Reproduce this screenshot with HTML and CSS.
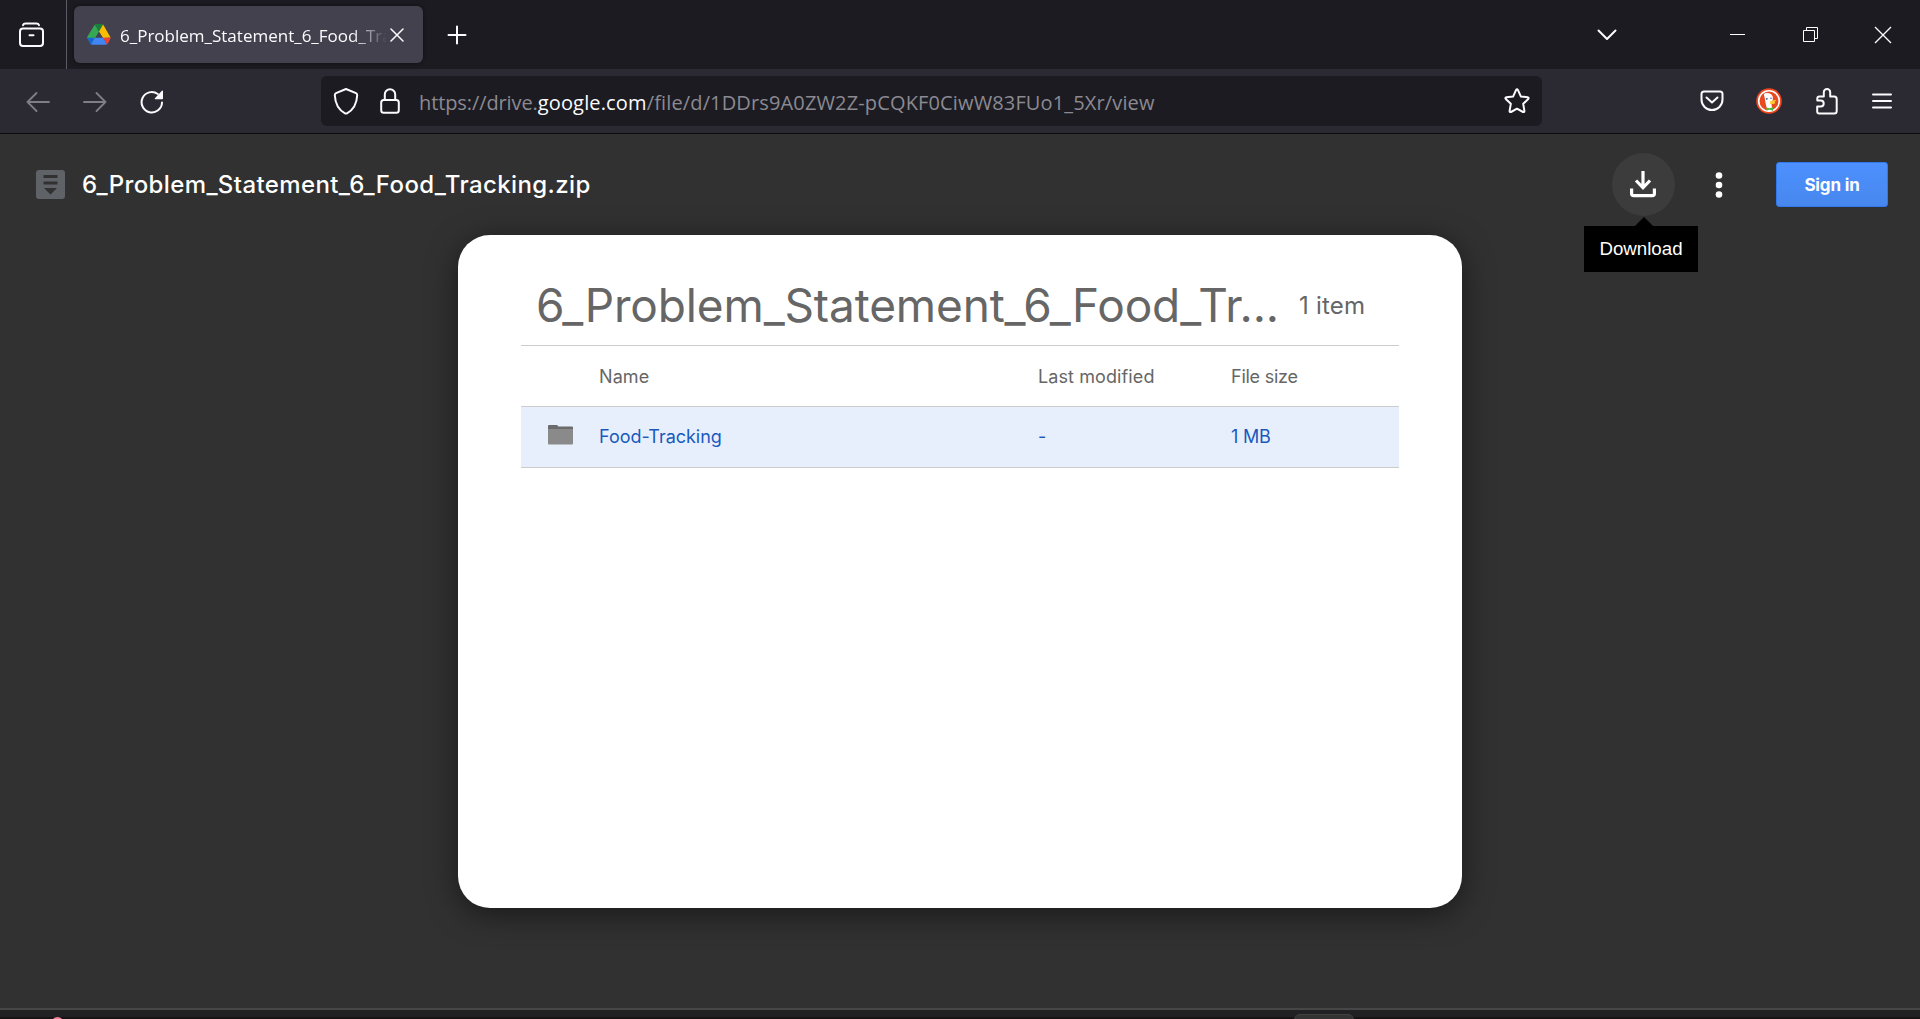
FILE: index.html
```html
<!DOCTYPE html>
<html lang="en">
<head>
<meta charset="utf-8">
<title>6_Problem_Statement_6_Food_Tracking.zip - Google Drive</title>
<link rel="stylesheet" href="styles.css">
</head>
<body>
<div class="window">
  <header class="tabbar">
    <div class="firefox-view">
      <svg width="28" height="28" viewBox="0 0 28 28" fill="none" stroke="#fbfbfe" stroke-width="2" stroke-linecap="round" stroke-linejoin="round"><path d="M6 3.2Q6.6 1.5 8.5 1.5h11Q21.400 1.500 22 3.200"/><rect x="3" y="6.500" width="23" height="17.500" rx="3"/><path d="M12.500 13.200h4"/></svg>
    </div>
    <div class="tab">
      <svg class="tab-icon" width="24" height="21" viewBox="0 0 24 21"><path fill="#34a853" d="M7.900.5 12 7.600 4.200 20.500.4 14Q0 13.200.4 12.500z"/><path fill="#188038" d="M7.900.5Q8.300 0 9 0h6q.8 0 1.100.5L12 7.600z"/><path fill="#fbbc04" d="M16.100.5 23.600 13.500 16.200 14 12 7.600z"/><path fill="#1967d2" d="M.1 13.800h7.800L4.200 20.600Q3.800 20.500 3.500 20z"/><path fill="#ea4335" d="M16.100 13.800h7.800Q23.800 14.400 20.500 20q-.3.500-.7.600z"/><path fill="#4285f4" d="M7.900 13.800h8.200l3.700 6.800q-.3.200-1 .2H5.200q-.6 0-1-.2z"/></svg>
      <span class="tab-title">6_Problem_Statement_6_Food_Tracking.zip</span>
      <svg class="tab-close" width="14" height="14" viewBox="0 0 14 14" stroke="#fbfbfe" stroke-width="1.500" stroke-linecap="round"><path d="m1 1 12 12M13 1 1 13"/></svg>
    </div>
    <svg class="new-tab" width="20" height="20" viewBox="0 0 20 20" stroke="#fbfbfe" stroke-width="2" stroke-linecap="round"><path d="M10 1.500v17M1.500 10h17"/></svg>
    <div class="window-controls">
      <svg width="20" height="12" viewBox="0 0 20 12" fill="none" stroke="#fbfbfe" stroke-width="2" stroke-linecap="round" stroke-linejoin="round"><path d="m1.500 1.500 8.500 8.500 8.500-8.500"/></svg>
      <svg width="15" height="1" viewBox="0 0 15 1"><path fill="#fff" d="M0 0h15v1H0z"/></svg>
      <svg width="15" height="15" viewBox="0 0 15 15" fill="none" stroke="#fff"><path d="M.5 3.500h11v11H.5zM3.500 3.500v-3h11v11h-3"/></svg>
      <svg width="18" height="18" viewBox="0 0 18 18" stroke="#fff" stroke-width="1.300"><path d="m1 1 16 16M17 1 1 17"/></svg>
    </div>
  </header>

  <nav class="toolbar">
    <div class="nav-buttons">
      <svg width="24" height="20" viewBox="0 0 24 20" fill="none" stroke="#7f7e85" stroke-width="1.800" stroke-linecap="round" stroke-linejoin="round"><path d="M23 10H1.500M10.500 1l-9 9 9 9"/></svg>
      <svg width="24" height="20" viewBox="0 0 24 20" fill="none" stroke="#7f7e85" stroke-width="1.800" stroke-linecap="round" stroke-linejoin="round"><path d="M1 10h21.500M13.500 1l9 9-9 9"/></svg>
      <svg width="24" height="24" viewBox="0 0 24 24" fill="none" stroke="#fbfbfe" stroke-width="2" stroke-linecap="round"><path d="M22 12.500A10.200 10.200 0 1 1 17.800 4"/><path fill="#fbfbfe" stroke="none" d="M23 1v7.500q0 .7-.7.700h-7q-1-.2-.4-1l7-7.400Q22.800.2 23 1z"/></svg>
    </div>
    <div class="urlbar">
      <svg width="26" height="28" viewBox="0 0 26 28" fill="none" stroke="#fbfbfe" stroke-width="2" stroke-linejoin="round"><path d="M13 2 23 6.200q1.300.6 1.200 2C23.800 16.500 20 23 14 26.300q-1 .5-2 0C6 23 2.200 16.500 1.800 8.200q0-1.400 1.200-2z"/></svg>
      <svg class="lock" width="20" height="26" viewBox="0 0 20 26" fill="none" stroke="#fbfbfe" stroke-width="2"><rect x="1.200" y="12" width="17.600" height="12.800" rx="2.500"/><path d="M4.800 12V6.500a5.200 5.200 0 0 1 10.400 0V12"/></svg>
      <span class="url">https://drive.<b>google.com</b><span class="url-path">/file/d/1DDrs9A0ZW2Z-pCQKF0CiwW83FUo1_5Xr/view</span></span>
      <svg class="star" width="26" height="26" viewBox="0 0 26 26" fill="none" stroke="#fbfbfe" stroke-width="2" stroke-linejoin="round"><path d="M12 2.200q1-1.700 2 0l2.800 6.200 6.800.9q1.600.4.600 1.700l-5 4.800 1.200 7q.1 1.700-1.400 1.200l-6-3.300-6 3.300q-1.500.5-1.400-1.200l1.200-7-5-4.800q-1-1.300.6-1.700l6.800-.9z"/></svg>
    </div>
    <div class="extensions">
      <svg class="pocket" width="24" height="22" viewBox="0 0 24 22" fill="none" stroke="#fbfbfe" stroke-width="2" stroke-linecap="round" stroke-linejoin="round"><path d="M4 1.500h16q2.500 0 2.500 2.500v5.500a10.500 10.500 0 0 1-21 0V4Q1.500 1.500 4 1.500z"/><path d="m6.500 7.500 5.500 5 5.500-5"/></svg>
      <svg width="26" height="26" viewBox="0 0 26 26"><circle cx="13" cy="13" r="12.800" fill="#ee4720"/><circle cx="13" cy="13" r="10.300" fill="#e8491f" stroke="#fff" stroke-width="1.600"/><path fill="#fff" d="M8.500 9Q7 5.500 9.500 5q6-.5 7.200 3.500.5 2-.2 4l-1 4 1 6.300q-3 .8-5 .2Q9.500 16 8.500 9z"/><path fill="#fc3" d="M14 13.500q3-2 6.500-1.500l-2 1.800 1 1.400q-3 1.500-5.500.3z"/><path fill="#4cba3c" d="m10.500 19.500 3 .8 3.500-1v3.400l-3.500-1-3 .8z"/><circle cx="10.800" cy="10.800" r=".9" fill="#2d4f8e"/><circle cx="15" cy="10.200" r=".7" fill="#2d4f8e"/></svg>
      <svg width="22" height="27" viewBox="0 0 22 27" fill="none" stroke="#fbfbfe" stroke-width="2" stroke-linejoin="round"><path d="M3.500 8.500h4.300V4.300a3.200 3.200 0 0 1 6.400 0v4.200h4q2.500 0 2.500 2.500v12q0 2.500-2.500 2.500h-15q-2 0-2-2v-5h3.500a2.900 2.900 0 0 0 0-6H1.300v-2q0-2 2.200-2z"/></svg>
      <svg width="20" height="16" viewBox="0 0 20 16" stroke="#fbfbfe" stroke-width="2" stroke-linecap="round"><path d="M1 1.500h18M1 8h18M1 14.500h18"/></svg>
    </div>
  </nav>

  <main class="viewer">
    <div class="viewer-header">
      <svg width="29" height="29" viewBox="0 0 29 29"><rect width="29" height="29" rx="3" fill="#5f6368"/><path fill="#313131" d="M7.500 5h14v3h-14zM7.500 11.500h14v3h-14zM8 18h13l-6.500 6.500z"/></svg>
      <h1 class="file-name">6_Problem_Statement_6_Food_Tracking.zip</h1>
      <div class="download">
        <svg width="26" height="27" viewBox="0 0 26 27" fill="none" stroke="#fff" stroke-width="3.200"><path d="M13 0v17M6 9.500l7 7.300 7-7.300M1.600 17.500v5q0 2.200 2.200 2.200h18.400q2.200 0 2.200-2.200v-5"/></svg>
        <div class="tooltip">Download</div>
      </div>
      <svg class="more" width="8" height="26" viewBox="0 0 8 26" fill="#fff"><circle cx="4" cy="3.500" r="3.300"/><circle cx="4" cy="13" r="3.300"/><circle cx="4" cy="22.500" r="3.300"/></svg>
      <a class="sign-in">Sign in</a>
    </div>

    <section class="archive">
      <div class="archive-title">
        <h2>6_Problem_Statement_6_Food_Tr...</h2>
        <span>1 item</span>
      </div>
      <div class="row head"><span></span><span>Name</span><span>Last modified</span><span class="size">File size</span></div>
      <div class="row selected">
        <svg width="25" height="20" viewBox="0 0 25 20"><path fill="#6b6b6b" d="M0 1q0-1 1-1h8l1.500 1.500H24q1 0 1 1V5H0z"/><path fill="#8a8a8a" d="M0 4h25v14.500q0 1-1 1H1q-1 0-1-1z"/></svg>
        <span class="entry">Food-Tracking</span><span>-</span><span class="size">1 MB</span>
      </div>
    </section>
  </main>

  <footer class="taskbar"><i class="pink-app"></i><i class="active-app"></i></footer>
</div>
</body>
</html>
```
FILE: styles.css
```css
* { box-sizing: border-box; }

body {
  margin: 0;
  background: #313131;
  overflow: hidden;
}

svg { display: block; flex: none; }

.window {
  display: flex;
  flex-direction: column;
  width: 1920px;
  height: 1019px;
}

/* Tab strip */
.tabbar {
  display: flex;
  align-items: center;
  height: 69px;
  background: #1c1b22;
}

.firefox-view {
  width: 67px;
  height: 69px;
  padding: 22px 0 0 17px;
  border-right: 1px solid #5b5b66;
}

.tab {
  display: flex;
  align-items: center;
  width: 349px;
  height: 57px;
  margin-left: 7px;
  padding-left: 13px;
  border-radius: 6px;
  background: #42414d;
  box-shadow: 0 0 4px rgba(0, 0, 0, .5);
}

.tab-title {
  width: 267px;
  margin-left: 9px;
  padding-top: 2px;
  overflow: hidden;
  white-space: nowrap;
  color: #fbfbfe;
  font: 17px/28px "Open Sans", sans-serif;
  -webkit-mask-image: linear-gradient(to left, transparent, #000 36px);
  mask-image: linear-gradient(to left, transparent, #000 36px);
}

.tab-close { margin-left: 3px; }
.new-tab { margin-left: 24px; }

.window-controls {
  display: grid;
  grid-template-columns: 133px 73px 71px 36px;
  align-items: center;
  margin-left: auto;
  padding-right: 10px;
}

/* Navigation toolbar */
.toolbar {
  display: flex;
  align-items: center;
  height: 65px;
  padding: 0 27px 0 26px;
  background: #2b2a33;
  border-bottom: 1px solid #0c0c0d;
}

.nav-buttons {
  display: flex;
  align-items: center;
  gap: 33px;
  width: 295px;
  padding-top: 1px;
}

.urlbar {
  display: flex;
  align-items: center;
  width: 1221px;
  height: 50px;
  padding: 0 12px;
  border-radius: 6px;
  background: #1c1b22;
}

.lock { margin-left: 21px; }

.url {
  margin-left: 19px;
  padding-top: 3px;
  color: #8b8a91;
  font: 20px/30px "Open Sans", sans-serif;
  letter-spacing: -.1px;
  white-space: nowrap;
}

.url b {
  color: #fbfbfe;
  font-weight: 400;
  letter-spacing: .15px;
}

.url-path { letter-spacing: .14px; }
.star { margin-left: auto; }

.extensions {
  display: flex;
  align-items: center;
  gap: 34px;
  margin-left: auto;
  padding-right: 1px;
}

.pocket { margin-right: -2px; }

/* Drive file viewer */
.viewer {
  flex: 1;
  display: flex;
  flex-direction: column;
  align-items: center;
  min-height: 0;
  font-family: Inter, sans-serif;
}

.viewer-header {
  display: flex;
  align-items: center;
  width: 100%;
  height: 101px;
  padding: 0 32px 0 36px;
}

.file-name {
  margin: 0 0 0 17px;
  color: #fff;
  font-size: 24px;
  font-weight: 500;
  line-height: 36px;
  letter-spacing: .38px;
}

.download {
  position: relative;
  display: grid;
  place-items: center;
  width: 63px;
  height: 63px;
  margin-left: auto;
  padding-right: 1px;
  border-radius: 50%;
  background: #3c3c3c;
}

.tooltip {
  position: absolute;
  top: 73px;
  left: -28px;
  width: 114px;
  height: 46px;
  background: #000;
  color: #fff;
  font: 18.7px/45px "Liberation Sans", sans-serif;
  text-align: center;
}

.tooltip::before {
  content: "";
  position: absolute;
  top: -9px;
  left: 51px;
  border: solid transparent;
  border-width: 0 9px 9px;
  border-bottom-color: #000;
}

.more { margin-left: 40px; }

.sign-in {
  width: 112px;
  height: 45px;
  margin-left: 53px;
  border: 1px solid #3079ed;
  border-radius: 3px;
  background: linear-gradient(#4d90fe, #4787ed);
  color: #fff;
  font-size: 17px;
  font-weight: 700;
  line-height: 45px;
  letter-spacing: -.15px;
  text-align: center;
}

.archive {
  width: 1004px;
  height: 673px;
  padding: 38px 63px 0;
  border-radius: 32px;
  background: #fff;
  box-shadow: 0 6px 30px rgba(0, 0, 0, .5);
  color: #666;
}

.archive-title {
  display: flex;
  align-items: center;
  height: 73px;
  padding-left: 15px;
  border-bottom: 1px solid #ccc;
}

.archive-title h2 {
  width: 743px;
  margin: 0;
  padding-bottom: 8px;
  font-size: 46px;
  font-weight: 400;
  line-height: 60px;
  letter-spacing: -.14px;
  white-space: nowrap;
}

.archive-title span {
  margin-left: 20px;
  padding-bottom: 7px;
  font-size: 24px;
  line-height: 32px;
  letter-spacing: .2px;
}

.row {
  display: grid;
  grid-template-columns: 51px 439px 193px 1fr;
  align-items: center;
  height: 61px;
  padding-left: 27px;
  border-bottom: 1px solid #ccc;
  font-size: 18px;
  letter-spacing: .1px;
}

.row .size { letter-spacing: -.25px; }
.row .entry { letter-spacing: -.03px; }

.selected {
  background: #e8effc;
  color: #185abc;
}

.selected span { padding-bottom: 2px; }
.selected svg { margin-bottom: 5px; }

/* Top edge of the desktop taskbar */
.taskbar {
  position: relative;
  height: 11px;
  border-top: 2px solid #464646;
  background: linear-gradient(#212123 7px, #171416 7px);
  overflow: hidden;
}

.pink-app,
.active-app { position: absolute; }

.pink-app {
  top: 7px;
  left: 51px;
  width: 13px;
  height: 13px;
  border-radius: 50%;
  background: #f77f9c;
}

.active-app {
  top: 4px;
  left: 1294px;
  width: 60px;
  height: 20px;
  border: 1px solid #424242;
  border-radius: 6px;
  background: #333;
}
```
